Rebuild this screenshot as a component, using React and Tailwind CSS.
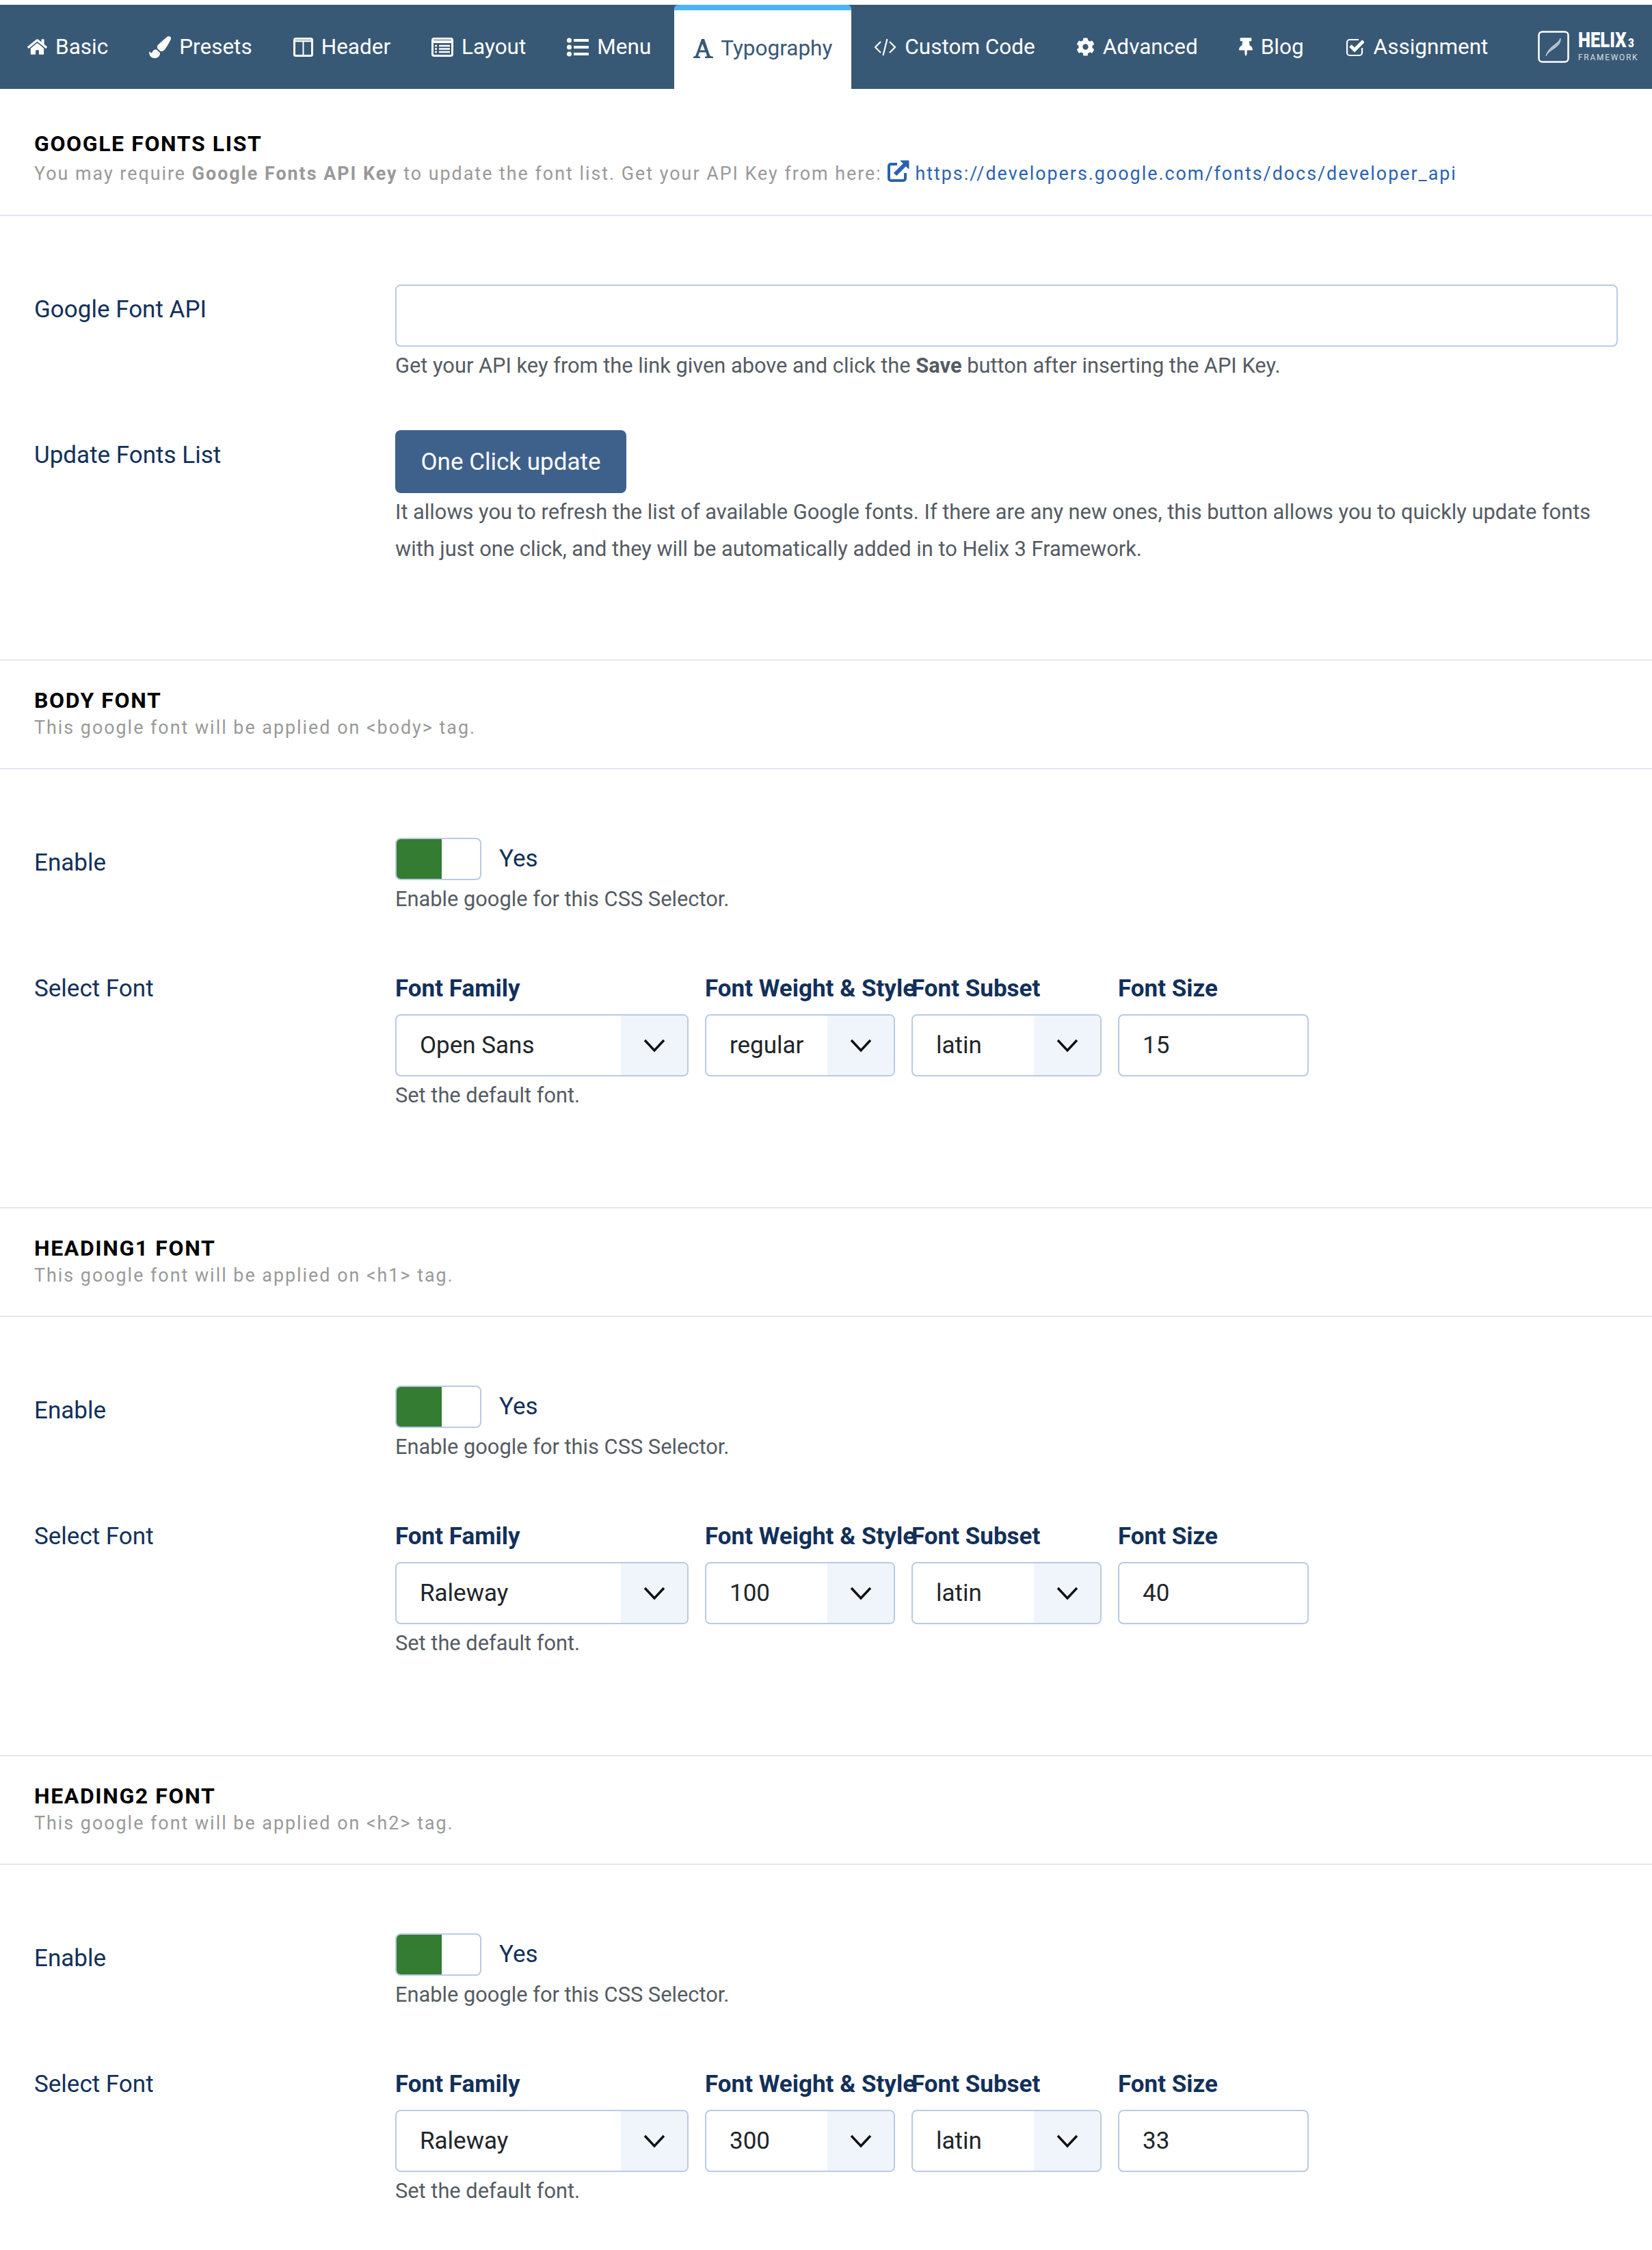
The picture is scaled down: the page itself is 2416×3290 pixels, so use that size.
import { FaHome, FaPaintBrush, FaCog, FaThumbtack } from 'react-icons/fa';

const ColumnsIcon = () => (
  <svg width="29" height="28" viewBox="0 0 29 28" fill="none" stroke="currentColor">
    <rect x="1.5" y="1.5" width="26" height="25" rx="2" strokeWidth="3" />
    <path d="M1 5H28" strokeWidth="2.5" />
    <path d="M14.5 5V27" strokeWidth="2" />
  </svg>
);

const ListAltIcon = () => (
  <svg width="32" height="28" viewBox="0 0 32 28" fill="none" stroke="currentColor">
    <rect x="1.5" y="1.5" width="29" height="25" rx="2.5" strokeWidth="3" />
    <path d="M1 6H31" strokeWidth="4" />
    <path d="M5 12H8M11 12H27M5 16.5H8M11 16.5H27M5 21H8M11 21H27" strokeWidth="2.4" />
  </svg>
);

const ListIcon = () => (
  <svg width="32" height="28" viewBox="0 0 32 28" fill="currentColor">
    <circle cx="3.5" cy="4" r="3.5" />
    <circle cx="3.5" cy="14" r="3.5" />
    <circle cx="3.5" cy="24" r="3.5" />
    <rect x="10" y="2" width="22" height="4" rx="0.5" />
    <rect x="10" y="12" width="22" height="4" rx="0.5" />
    <rect x="10" y="22" width="22" height="4" rx="0.5" />
  </svg>
);

const SerifAIcon = () => (
  <svg width="29" height="28" viewBox="0 0 29 28" fill="currentColor">
    <path d="M12 0H16L24 23.5C24.4 24.8 26 25.5 29 25.7V28H17V25.8C19.4 25.7 20 25 19.6 23.8L18.4 19.5H8.8L7.4 23.5C7 25 7.8 25.6 10 25.8V28H0V25.8C2 25.5 3.2 24.8 3.8 23.2ZM13.2 7L9.8 16.5H16.9Z" />
  </svg>
);

const CodeIcon = () => (
  <svg width="33" height="28" viewBox="0 0 33 28" fill="none" stroke="currentColor" strokeWidth="2.2">
    <path d="M10 6L2 14L10 22" />
    <path d="M23 6L31 14L23 22" />
    <path d="M19.5 2L13.5 26" />
  </svg>
);

const CheckIcon = () => (
  <svg className="ml-[1px] mr-[2px]" width="27" height="28" viewBox="0 0 27 28" fill="none" stroke="currentColor">
    <path d="M24 15V22a4 4 0 0 1-4 4H6a4 4 0 0 1-4-4V7a4 4 0 0 1 4-4H19" strokeWidth="2.2" />
    <path d="M7 12L13 18L26 5" strokeWidth="5" />
  </svg>
);

const tabs = [
  { label: 'Basic', icon: <FaHome className="w-[29px] h-[27px]" /> },
  { label: 'Presets', icon: <FaPaintBrush className="w-[32px] h-[32px]" /> },
  { label: 'Header', icon: <ColumnsIcon /> },
  { label: 'Layout', icon: <ListAltIcon /> },
  { label: 'Menu', icon: <ListIcon /> },
  { label: 'Typography', icon: <SerifAIcon />, active: true },
  { label: 'Custom Code', icon: <CodeIcon /> },
  { label: 'Advanced', icon: <FaCog className="size-[27px]" /> },
  { label: 'Blog', icon: <FaThumbtack className="w-[20px] h-[29px]" /> },
  { label: 'Assignment', icon: <CheckIcon /> },
];

const Nav = () => (
  <div className="flex h-[123px] mt-[7px] bg-[#385975] pl-[10px] text-[31.5px]">
    {tabs.map((tab) =>
      tab.active ? (
        <div key={tab.label} className="flex items-center gap-[11px] ml-[4px] mr-[3px] px-[28px] pb-[4px] bg-white border-t-[8px] border-[#4db2ff] rounded-t-[6px] text-[#385975]">
          {tab.icon}
          <span>{tab.label}</span>
        </div>
      ) : (
        <div key={tab.label} className="flex items-center gap-[12px] px-[30px] text-white">
          {tab.icon}
          <span>{tab.label}</span>
        </div>
      )
    )}
    <div className="flex items-center gap-[13px] ml-auto mr-[26px] text-white">
      <svg width="46" height="47" viewBox="0 0 46 47" fill="none" stroke="white">
        <rect x="1.5" y="1.5" width="43" height="44" rx="5" strokeWidth="2.5" />
        <path d="M33 11C31 19 15 23 12 37C16 27 35 24 33 11Z" fill="white" fillOpacity="0.6" strokeWidth="0.6" />
      </svg>
      <div className="flex flex-col w-[82px] -mt-[3px]">
        <span className="text-[32px] leading-[26px] font-black origin-left scale-x-[0.8] whitespace-nowrap">HELIX<span className="text-[19px] ml-[3px]">3</span></span>
        <span className="text-[12px] leading-[12px] tracking-[1.7px] opacity-80 mt-[2px]">FRAMEWORK</span>
      </div>
    </div>
  </div>
);

const Chevron = () => (
  <svg width="32" height="20" viewBox="0 0 32 20" fill="none" stroke="#111" strokeWidth="3.5">
    <path d="M2 2L16 17L30 2" />
  </svg>
);

const Select = ({ value }) => (
  <div className="flex h-[91px] w-full border-2 border-[#b8cbe3] rounded-[8px] overflow-hidden">
    <div className="flex-1 flex items-center pl-[34px] pt-[2px] text-[#212529]">{value}</div>
    <div className="flex items-center justify-center w-[97px] bg-[#f0f4fb]">
      <Chevron />
    </div>
  </div>
);

const Help = ({ children }) => (
  <p className="text-[#555b63] text-[30.8px] leading-[54px] pt-[1px]">{children}</p>
);

const Label = ({ children }) => (
  <div className="text-[#12305a] leading-[74px]">{children}</div>
);

const FontColumn = ({ title, width, children }) => (
  <div className={width}>
    <div className="h-[74px] leading-[74px] font-bold text-[#12305a] whitespace-nowrap">{title}</div>
    {children}
  </div>
);

const FontSection = ({ title, desc, family, weight, size }) => (
  <>
    <div className="pt-[38px] pb-[39px] px-[50px] border-b-2 border-[#e1e7f1]">
      <h2 className="text-[32px] leading-[40px] font-bold tracking-[1.6px] text-black">{title}</h2>
      <p className="text-[26.85px] leading-[40px] tracking-[2px] text-[#999]">{desc}</p>
    </div>
    <div className="pt-[100px] pb-[136px] px-[50px] flex flex-col gap-[67px] border-b-2 border-[#e1e7f1]">
      <div className="grid grid-cols-[528px_1fr]">
        <Label>Enable</Label>
        <div>
          <div className="flex items-center gap-[26px]">
            <div className="flex w-[126px] h-[62px] border-2 border-[#b8cbe3] rounded-[8px] overflow-hidden">
              <div className="w-[66px] bg-[#347c32]"></div>
            </div>
            <span className="text-[#12305a]">Yes</span>
          </div>
          <Help>Enable google for this CSS Selector.</Help>
        </div>
      </div>
      <div className="grid grid-cols-[528px_1fr]">
        <Label>Select Font</Label>
        <div>
          <div className="flex gap-[24px]">
            <FontColumn title="Font Family" width="w-[429px]">
              <Select value={family} />
            </FontColumn>
            <FontColumn title="Font Weight & Style" width="w-[278px]">
              <Select value={weight} />
            </FontColumn>
            <FontColumn title="Font Subset" width="w-[278px]">
              <Select value="latin" />
            </FontColumn>
            <FontColumn title="Font Size" width="w-[279px]">
              <div className="flex items-center h-[91px] pl-[34px] pt-[2px] border-2 border-[#b8cbe3] rounded-[8px] text-[#212529]">{size}</div>
            </FontColumn>
          </div>
          <Help>Set the default font.</Help>
        </div>
      </div>
    </div>
  </>
);

export default function App() {
  return (
    <div className="h-[3290px] overflow-hidden bg-white text-[35px] font-['Roboto',sans-serif]">
      <div className="bg-[#eceff4]">
        <Nav />
      </div>
      <div className="pt-[60px] pb-[40px] px-[50px] border-b-2 border-[#e1e7f1]">
        <h2 className="text-[32px] leading-[40px] font-bold tracking-[1.6px] text-black">GOOGLE FONTS LIST</h2>
        <p className="mt-[4px] text-[26.85px] leading-[40px] tracking-[2px] text-[#999]">
          You may require <b>Google Fonts API Key</b> to update the font list. Get your API Key from here:{' '}
          <span className="text-[#2a62b0]">
            <svg className="inline-block align-[-3px] mr-[8px]" width="32" height="32" viewBox="0 0 32 32" fill="none" stroke="currentColor">
              <path d="M14 6H5a3 3 0 0 0-3 3v18a3 3 0 0 0 3 3h18a3 3 0 0 0 3-3V19" strokeWidth="4" />
              <path d="M11 21L26 6" strokeWidth="6" />
              <path d="M19 1H31V13Z" fill="currentColor" strokeWidth="1" />
            </svg>
            https://developers.google.com/fonts/docs/developer_api
          </span>
        </p>
      </div>
      <div className="pt-[100px] pb-[134px] px-[50px] flex flex-col gap-[67px] border-b-2 border-[#e1e7f1]">
        <div className="grid grid-cols-[528px_1fr]">
          <Label>Google Font API</Label>
          <div>
            <div className="h-[91px] border-2 border-[#b8cbe3] rounded-[8px]"></div>
            <Help>Get your API key from the link given above and click the <b>Save</b> button after inserting the API Key.</Help>
          </div>
        </div>
        <div className="grid grid-cols-[528px_1fr]">
          <Label>Update Fonts List</Label>
          <div>
            <button className="h-[92px] w-[338px] pt-[2px] bg-[#3e618c] rounded-[8px] text-white">One Click update</button>
            <Help>It allows you to refresh the list of available Google fonts. If there are any new ones, this button allows you to quickly update fonts with just one click, and they will be automatically added in to Helix 3 Framework.</Help>
          </div>
        </div>
      </div>
      <FontSection title="BODY FONT" desc="This google font will be applied on <body> tag." family="Open Sans" weight="regular" size="15" />
      <FontSection title="HEADING1 FONT" desc="This google font will be applied on <h1> tag." family="Raleway" weight="100" size="40" />
      <FontSection title="HEADING2 FONT" desc="This google font will be applied on <h2> tag." family="Raleway" weight="300" size="33" />
    </div>
  );
}
